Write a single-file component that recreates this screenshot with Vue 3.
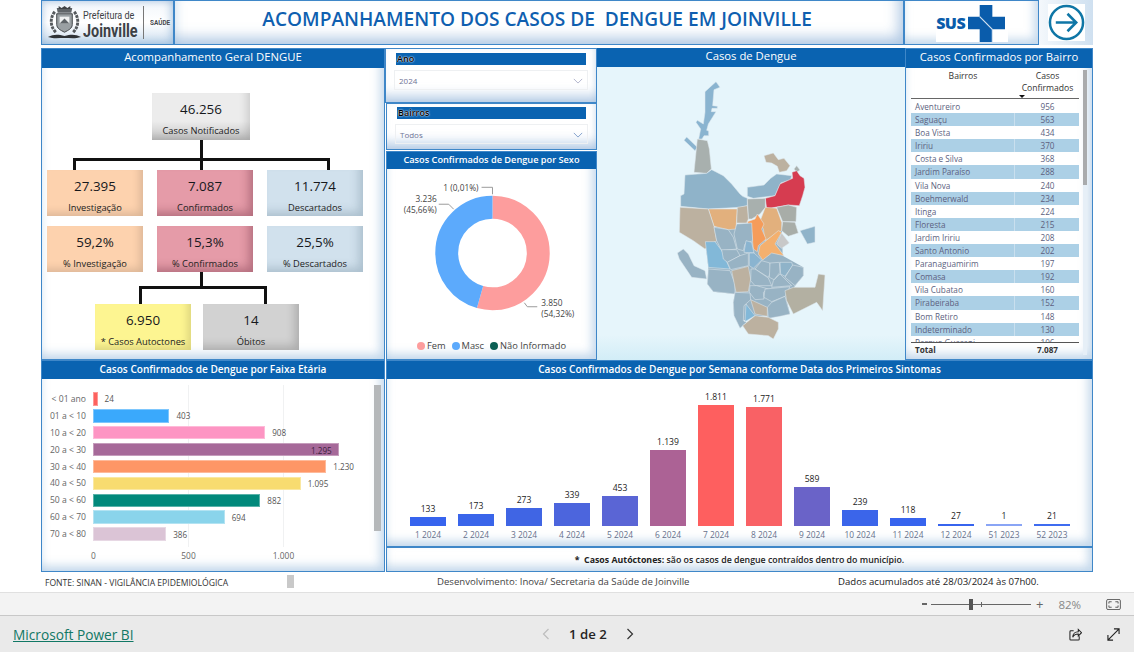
<template>
  <div class="app">
    <div class="report">
      <header class="head">
        <div class="box logo">
          <svg class="crest" viewBox="0 0 36 36">
            <path d="M10 3h16l-1 5H11z" fill="#5f6468" />
            <path d="M12 1l3 2 3-2 3 2 3-2v3H12z" fill="#3f4346" />
            <path d="M10 9h16v11c0 4-4 6-8 8-4-2-8-4-8-8z" fill="#9aa0a3" stroke="#3f4346" />
            <path d="M13 12h10v7H13z" fill="#eef0f0" />
            <path d="M13 19l5-5 5 5z" fill="#5f6468" />
            <path d="M8 7C3 13 3 22 9 28M28 7c5 6 5 15-1 21" fill="none" stroke="#55595c" stroke-width="3" stroke-dasharray="3 1" />
            <path d="M1 33c6-3 10-3 17-1 7-2 11-2 17 1-6 2-11 1-17 1s-11 1-17-1z" fill="#2f3336" />
          </svg>
          <div class="city">
            <span class="city-a">Prefeitura de</span>
            <span class="city-b">Joinville</span>
          </div>
          <span class="logo-line"></span>
          <span class="saude">SAÚDE</span>
        </div>
        <div class="box title">ACOMPANHAMENTO DOS CASOS DE&nbsp; DENGUE EM JOINVILLE</div>
        <div class="box sus">
          <div class="sus-in">
            <span class="sus-text">SUS</span>
            <svg class="sus-cross" viewBox="0 0 38 38">
              <path d="M12 0h13v12h13v13H25v13H12V25H0V12h12z" fill="#0a5cab" />
              <path d="M12 12l13 13" stroke="#d7e4f1" stroke-width="1.2" fill="none" />
              <path d="M25 25v13" stroke="#d7e4f1" stroke-width="1.2" fill="none" />
            </svg>
          </div>
        </div>
        <div class="next">
          <div class="next-in">
            <svg viewBox="0 0 38 38" class="next-ico">
              <circle cx="19" cy="19" r="17" fill="none" stroke="#0f76a6" stroke-width="2.6" />
              <path d="M8 19h21M20 10l9 9-9 9" fill="none" stroke="#0f76a6" stroke-width="2.6" />
            </svg>
          </div>
        </div>
      </header>

      <div class="top">
        <section class="box geral">
          <h3 class="bar-title big">Acompanhamento Geral DENGUE</h3>
          <div class="tree">
            <div class="card card-top gray">
              <b>46.256</b>
              <span>Casos Notificados</span>
            </div>
            <div class="stem"></div>
            <div class="fork fork-a"></div>
            <div class="cards">
              <div v-for="c in kpis" :key="c.label" class="card" :class="c.tone">
                <b>{{ c.value }}</b>
                <span>{{ c.label }}</span>
              </div>
            </div>
            <div class="stem stem-b"></div>
            <div class="fork fork-b"></div>
            <div class="cards-b">
              <div class="card yellow">
                <b>6.950</b>
                <span>* Casos Autoctones</span>
              </div>
              <div class="card silver">
                <b>14</b>
                <span>Óbitos</span>
              </div>
            </div>
          </div>
        </section>

        <div class="mid">
          <div class="box filter first">
            <div class="f-label">Ano</div>
            <div class="f-drop">
              <span>2024</span>
              <svg viewBox="0 0 12 7" class="chev"><path d="M1 1l5 5 5-5" fill="none" stroke="#a5a8c4" /></svg>
            </div>
          </div>
          <div class="box filter second">
            <div class="f-label">Bairros</div>
            <div class="f-drop">
              <span>Todos</span>
              <svg viewBox="0 0 12 7" class="chev"><path d="M1 1l5 5 5-5" fill="none" stroke="#6f93c4" /></svg>
            </div>
          </div>
          <section class="box sexo">
            <h3 class="bar-title small sexo-title">Casos Confirmados de Dengue por Sexo</h3>
            <svg class="donut" viewBox="0 0 210 164">
              <g transform="rotate(-90 106 83)">
                <circle
                  v-for="s in donut"
                  :key="s.name"
                  cx="106"
                  cy="83"
                  r="46"
                  fill="none"
                  stroke-width="23"
                  :stroke="s.color"
                  :stroke-dasharray="`${s.len} 400`"
                  :stroke-dashoffset="-s.start"
                />
              </g>
              <polyline points="95,17 106,17 106,24" class="lead" />
              <polyline points="52,34 62,34 67,39" class="lead" />
              <polyline points="138,133 141,137 151,137" class="lead" />
              <text x="92" y="21" text-anchor="end" class="lab">1 (0,01%)</text>
              <text x="50" y="32" text-anchor="end" class="lab">3.236</text>
              <text x="50" y="43" text-anchor="end" class="lab">(45,66%)</text>
              <text x="155" y="136" class="lab">3.850</text>
              <text x="155" y="147" class="lab">(54,32%)</text>
            </svg>
            <div class="legend">
              <span v-for="s in donut" :key="s.name"><i :style="{ background: s.color }"></i>{{ s.name }}</span>
            </div>
          </section>
        </div>

        <section class="box mapa">
          <h3 class="bar-title big">Casos de Dengue</h3>
          <svg class="map" viewBox="0 24 600 876">
            <polygon class="map-base" points="222,505 425,490 428,590 490,625 490,650 465,680 440,725 450,765 385,778 382,772 345,770 310,785 282,770 280,730 285,705 220,698 202,675 205,625 196,548 230,545" />
            <polygon v-for="(p, i) in regions" :key="i" :points="p[1]" :fill="p[0]" />
          </svg>
        </section>

        <section class="box bairros">
          <h3 class="bar-title big">Casos Confirmados por Bairro</h3>
          <div class="tb-wrap">
            <div class="tb">
              <div class="tb-head">
                <span>Bairros</span>
                <span class="tb-head-r">Casos Confirmados<i class="sort"></i></span>
              </div>
              <div class="tb-body">
                <div v-for="(r, i) in bairros" :key="r[0]" class="tb-row" :class="{ alt: i % 2 }">
                  <span>{{ r[0] }}</span>
                  <span class="num">{{ r[1] }}</span>
                </div>
              </div>
              <div class="tb-foot">
                <span>Total</span>
                <span class="num">7.087</span>
              </div>
            </div>
            <div class="tb-scroll"><i></i></div>
          </div>
        </section>
      </div>

      <div class="bottom">
        <section class="box faixa">
          <h3 class="bar-title small">Casos Confirmados de Dengue por Faixa Etária</h3>
          <div class="hb-wrap">
            <div class="hb-plot">
              <div v-for="r in faixas" :key="r.label" class="hb-row">
                <span class="hb-label">{{ r.label }}</span>
                <span class="hb-bar" :style="{ width: r.value * 0.1897 + 'px', background: r.color }">
                  <em v-if="r.value > 1290">{{ r.text }}</em>
                </span>
                <span v-if="r.value <= 1290" class="hb-val">{{ r.text }}</span>
              </div>
              <div class="hb-axis">
                <span>0</span>
                <span>500</span>
                <span>1.000</span>
              </div>
            </div>
            <div class="hb-scroll"></div>
          </div>
        </section>
        <div class="right-col">
          <section class="box semana">
            <h3 class="bar-title small">Casos Confirmados de Dengue por Semana conforme Data dos Primeiros Sintomas</h3>
            <div class="cols">
              <div v-for="c in semanas" :key="c.label" class="col">
                <span class="col-val">{{ c.text }}</span>
                <span class="col-bar" :style="{ height: c.value * 0.067 + 'px', background: c.color }"></span>
                <span class="col-label">{{ c.label }}</span>
              </div>
            </div>
          </section>
          <div class="box note"><b>*&nbsp; Casos Autóctones:</b>&nbsp;são os casos de dengue contraídos dentro do município.</div>
        </div>
      </div>

      <footer class="foot">
        <span class="f1">FONTE: SINAN - VIGILÂNCIA EPIDEMIOLÓGICA</span>
        <i class="f-block"></i>
        <span class="f2">Desenvolvimento: Inova/ Secretaria da Saúde de Joinville</span>
        <span class="f3">Dados acumulados até 28/03/2024 às 07h00.</span>
      </footer>
    </div>

    <div class="zoom-bar">
      <span class="z-minus"></span>
      <div class="slider"><i class="tick"></i><i class="thumb"></i></div>
      <span class="z-plus">+</span>
      <span class="z-pct">82%</span>
      <svg class="z-fit" viewBox="0 0 16 12">
        <rect x="0.5" y="0.5" width="15" height="11" rx="1.5" fill="none" stroke="#555" />
        <path d="M3 5V3h3M10 3h3v2M13 7v2h-3M6 9H3V7" fill="none" stroke="#555" />
      </svg>
    </div>
    <div class="pbi-bar">
      <a class="pbi-link">Microsoft Power BI</a>
      <div class="pager">
        <svg viewBox="0 0 8 12" class="pg"><path d="M6.5 1L1.5 6l5 5" fill="none" stroke="#bdbdbd" stroke-width="1.2" /></svg>
        <span>1 de 2</span>
        <svg viewBox="0 0 8 12" class="pg"><path d="M1.5 1l5 5-5 5" fill="none" stroke="#333" stroke-width="1.2" /></svg>
      </div>
      <div class="pbi-icons">
        <svg viewBox="0 0 14 14" class="ico">
          <path d="M5 3H2a1 1 0 0 0-1 1v8a1 1 0 0 0 1 1h8a1 1 0 0 0 1-1V9" fill="none" stroke="#222" stroke-width="1.1" />
          <path d="M4 10c0-4 3-6 6-6V1.500l3.500 3.500L10 8.500V6.500c-3 0-5 1-6 3.500z" fill="none" stroke="#222" stroke-width="1.1" />
        </svg>
        <svg viewBox="0 0 14 14" class="ico">
          <path d="M1 13L13 1M7.500 1H13v5.500M1 7.500V13h5.500" fill="none" stroke="#222" stroke-width="1.2" />
        </svg>
      </div>
    </div>
  </div>
</template>

<script setup>
const kpis = [
  { value: '27.395', label: 'Investigação', tone: 'orange' },
  { value: '7.087', label: 'Confirmados', tone: 'rose' },
  { value: '11.774', label: 'Descartados', tone: 'blue' },
  { value: '59,2%', label: '% Investigação', tone: 'orange' },
  { value: '15,3%', label: '% Confirmados', tone: 'rose' },
  { value: '25,5%', label: '% Descartados', tone: 'blue' },
];

// circunferencia do donut: 2 * pi * 46
const circ = 289;
const donut = [
  { name: 'Fem', color: '#fd9d9d', len: circ * 0.5432, start: 0 },
  { name: 'Masc', color: '#5caafc', len: circ * 0.4566, start: circ * 0.5432 },
  { name: 'Não Informado', color: '#0b5f54', len: 0.4, start: circ * 0.9998 },
];

const bairros = [
  ['Aventureiro', 956], ['Saguaçu', 563], ['Boa Vista', 434], ['Iririu', 370],
  ['Costa e Silva', 368], ['Jardim Paraíso', 288], ['Vila Nova', 240], ['Boehmerwald', 234],
  ['Itinga', 224], ['Floresta', 215], ['Jardim Iririu', 208], ['Santo Antonio', 202],
  ['Paranaguamirim', 197], ['Comasa', 192], ['Vila Cubatao', 160], ['Pirabeiraba', 152],
  ['Bom Retiro', 148], ['Indeterminado', 130], ['Parque Guarani', 106],
];

const faixas = [
  { label: '< 01 ano', value: 24, text: '24', color: '#fd625e' },
  { label: '01 a < 10', value: 403, text: '403', color: '#3aa9fc' },
  { label: '10 a < 20', value: 908, text: '908', color: '#fd95c3' },
  { label: '20 a < 30', value: 1295, text: '1.295', color: '#a66999' },
  { label: '30 a < 40', value: 1230, text: '1.230', color: '#fe9666' },
  { label: '40 a < 50', value: 1095, text: '1.095', color: '#f8dc70' },
  { label: '50 a < 60', value: 882, text: '882', color: '#01897b' },
  { label: '60 a < 70', value: 694, text: '694', color: '#8ad4eb' },
  { label: '70 a < 80', value: 386, text: '386', color: '#dbc4d6' },
];

const semanas = [
  { label: '1 2024', value: 133, text: '133', color: '#3764ee' },
  { label: '2 2024', value: 173, text: '173', color: '#3a65ea' },
  { label: '3 2024', value: 273, text: '273', color: '#4065e4' },
  { label: '4 2024', value: 339, text: '339', color: '#4c65dd' },
  { label: '5 2024', value: 453, text: '453', color: '#5a65d5' },
  { label: '6 2024', value: 1139, text: '1.139', color: '#ac6295' },
  { label: '7 2024', value: 1811, text: '1.811', color: '#fe5f5f' },
  { label: '8 2024', value: 1771, text: '1.771', color: '#f96165' },
  { label: '9 2024', value: 589, text: '589', color: '#6a63c8' },
  { label: '10 2024', value: 239, text: '239', color: '#3b65ea' },
  { label: '11 2024', value: 118, text: '118', color: '#3764ee' },
  { label: '12 2024', value: 27, text: '27', color: '#3764ee' },
  { label: '51 2023', value: 1, text: '1', color: '#8aa5f5' },
  { label: '52 2023', value: 21, text: '21', color: '#3f6cf0' },
];

// bairros do mapa, em coordenadas do recorte 600x900
const BLUE = '#8fb3c9';
const STEEL = '#98b3c4';
const SKY = '#82b8d8';
const GRAY = '#a8b0ae';
const TAN = '#bcb1a0';
const PEACH = '#e2b07d';
const regions = [
  ['#8ab4d0', '228,68 240,85 222,92 218,140 232,142 232,148 216,148 214,158 228,158 205,195 200,214 206,216 206,230 192,230 186,240 176,240 182,210 168,190 172,184 190,195 195,160 195,98'],
  ['#8ab4d0', '140,234 172,265 165,275 132,244'],
  [GRAY, '172,240 202,245 208,270 214,330 200,343 162,340'],
  [BLUE, '135,348 200,343 215,332 250,350 275,375 300,405 308,412 322,418 322,440 300,445 205,450 122,442 122,410 132,405'],
  [BLUE, '322,385 372,378 392,358 410,345 455,350 452,362 422,372 405,410 340,418 322,412'],
  [TAN, '372,290 400,282 415,302 432,298 450,320 440,335 418,340 412,322 395,312 378,310'],
  [GRAY, '462,330 470,320 480,333 470,340'],
  ['#d63c50', '456,340 470,335 480,350 492,358 495,385 488,410 478,440 445,438 405,445 380,450 376,418 405,410 420,375 458,358'],
  [GRAY, '322,420 376,418 376,445 360,465 335,480 325,480'],
  [PEACH, '205,450 292,450 288,510 265,512 222,502'],
  [TAN, '292,445 322,440 325,480 320,492 290,492'],
  [TAN, '120,445 205,450 222,502 230,545 195,570 160,545 118,520'],
  [PEACH, '376,445 410,448 425,490 425,515 375,545 370,510 358,492'],
  ['#a8ada8', '410,445 445,438 470,445 468,488 428,488'],
  ['#a8ada8', '428,488 465,490 475,522 445,532 425,515'],
  ['#c8c8c8', '425,522 448,552 425,568 410,555'],
  [BLUE, '480,515 525,502 525,550 502,555'],
  ['#f59c5a', '322,488 345,480 352,465 372,495 365,510 378,540 355,560 352,578 340,570 335,520'],
  ['#f4b06e', '415,515 425,520 405,555 432,590 395,582 368,603 355,585 360,560'],
  [STEEL, '222,505 265,512 280,535 290,570 245,575 230,545'],
  [STEEL, '290,495 335,492 338,545 315,555 310,575 292,570 282,525'],
  [SKY, '196,548 225,548 245,575 270,630 205,625'],
  [STEEL, '245,572 290,572 300,590 262,610 250,600'],
  ['#8ab4d0', '318,545 335,550 342,582 312,580'],
  [STEEL, '262,610 300,590 325,582 325,620 272,632'],
  ['#8ab4d0', '328,582 342,582 365,603 340,628 328,620'],
  [STEEL, '130,570 145,585 162,620 195,635 200,660 155,655 118,600 112,582'],
  [STEEL, '205,630 270,635 285,675 285,705 220,698 202,675'],
  [TAN, '275,635 325,622 332,660 325,698 288,700'],
  [STEEL, '345,630 365,605 390,612 392,640 385,655'],
  [STEEL, '390,612 418,610 420,640 402,662 388,655'],
  [BLUE, '420,610 455,610 458,620 435,652 422,645'],
  [STEEL, '458,618 490,625 490,650 465,680 435,655'],
  [STEEL, '333,630 345,630 385,657 395,680 345,680 332,665'],
  [STEEL, '420,645 455,680 395,685 400,665'],
  [STEEL, '330,680 350,680 385,690 370,700 372,720 345,722 328,700'],
  [STEEL, '375,690 450,683 435,712 395,728 372,715'],
  [STEEL, '395,730 435,712 450,765 420,772 385,778 382,745'],
  ['#b3b0a2', '435,695 460,685 525,685 535,645 555,648 548,755 530,730 460,765 440,725'],
  [STEEL, '285,700 330,702 332,722 312,740 310,785 320,790 300,808 282,770 280,730'],
  [SKY, '318,735 345,770 315,788'],
  [TAN, '332,722 382,745 382,772 345,765'],
  [TAN, '345,770 385,775 415,790 415,810 400,840 385,830 360,828 325,825 308,800'],
];
</script>

<style>
body {
  background: #fff;
}
</style>

<style scoped>
.app {
  width: 1134px;
  height: 652px;
  overflow: hidden;
  font-family: "Open Sans", "Noto Sans", sans-serif;
  color: #333;
  background: #fff;
}

.report {
  width: 1052px;
  height: 592px;
  padding-left: 41px;
}

.box {
  box-sizing: border-box;
  border: 1px solid #3f87c8;
  background: #fff;
  box-shadow: inset -7px -8px 10px -3px rgba(150, 185, 220, 0.55), inset 5px 0 6px -4px rgba(190, 215, 235, 0.5);
}

.head {
  display: flex;
  height: 45px;
  margin-bottom: 3px;
}

.logo {
  width: 133px;
  flex: none;
  display: flex;
  align-items: center;
  padding-left: 5px;
  background: linear-gradient(#f1f6fb, #fff 50%, #cfe0f0);
  box-shadow: inset -5px -5px 8px -3px rgba(130, 170, 210, 0.6), inset 4px 4px 6px -3px rgba(130, 170, 210, 0.5);
}

.crest {
  width: 35px;
  height: 35px;
  flex: none;
}

.city {
  display: flex;
  flex-direction: column;
  flex: none;
  width: 54px;
  margin: 3px 0 0 1px;
  font-family: Roboto, "Liberation Sans", sans-serif;
  color: #3d4145;
  line-height: 1;
}

.city-a {
  font-size: 11px;
  line-height: 12px;
  white-space: nowrap;
  transform: scaleX(0.82);
  transform-origin: left;
}

.city-b {
  font-size: 18px;
  line-height: 17px;
  font-weight: 700;
  transform: scaleX(0.8);
  transform-origin: left;
}

.logo-line {
  flex: none;
  width: 1px;
  height: 33px;
  margin-left: 6px;
  background: #777;
}

.saude {
  flex: none;
  width: 19px;
  margin-left: 6px;
  font-family: Roboto, "Liberation Sans", sans-serif;
  font-size: 8px;
  font-weight: 700;
  color: #44484c;
  transform: scaleX(0.8);
  transform-origin: left;
}

.title {
  width: 731px;
  display: flex;
  align-items: center;
  justify-content: center;
  padding-right: 4px;
  padding-bottom: 7px;
  font-size: 19.1px;
  font-weight: 600;
  color: #0f5fb0;
  white-space: nowrap;
  box-shadow: inset -10px -12px 14px -6px rgba(140, 175, 215, 0.7), inset 8px 0 10px -6px rgba(170, 200, 225, 0.5);
}

.sus {
  width: 135px;
  display: flex;
  justify-content: center;
  padding-left: 1px;
}

.sus-in {
  display: flex;
  align-items: center;
  gap: 3px;
  width: 72px;
  height: 38px;
  margin-top: 3px;
  background: #fff;
}

.sus-text {
  font-size: 16px;
  font-weight: 800;
  color: #0a5cab;
  letter-spacing: -0.5px;
}

.sus-cross {
  width: 37px;
  height: 37px;
}

.next {
  width: 54px;
  background: linear-gradient(90deg, #f4f8fc, #cfe0f0);
  padding: 4px 0 0 9px;
  box-sizing: border-box;
}

.next-in {
  width: 37px;
  height: 37px;
  background: #fff;
}

.next-ico {
  display: block;
  width: 37px;
  height: 37px;
}

.top {
  display: grid;
  grid-template-columns: 345px 211px 308px 188px;
  height: 313px;
}

.bar-title {
  margin: 0;
  background: #0a63b1;
  color: #fff;
  text-align: center;
  font-weight: 400;
  white-space: nowrap;
}

.bar-title.big {
  height: 19px;
  font-size: 11.3px;
  line-height: 16px;
}

.bar-title.small {
  height: 18px;
  font-size: 10.1px;
  line-height: 16px;
  font-weight: 600;
}

.bar-title.sexo-title {
  height: 17px;
  font-size: 9.2px;
  line-height: 15px;
}

.geral {
  width: 344px;
  height: 312px;
}

.tree {
  padding: 25px 0 0 5px;
}

.card {
  box-sizing: border-box;
  width: 96px;
  height: 46px;
  padding-top: 7px;
  display: flex;
  flex-direction: column;
  align-items: center;
  color: #222;
  box-shadow: inset -5px -5px 8px -2px rgba(0, 0, 0, 0.14);
}

.card b {
  font-size: 13.4px;
  line-height: 18px;
  font-weight: 400;
  color: #16181c;
}

.card span {
  margin-top: 5.500px;
  font-size: 9.3px;
  line-height: 13px;
  white-space: nowrap;
}

.card-top {
  width: 98px;
  height: 47px;
  margin-left: 105px;
}

.gray {
  background: linear-gradient(#ececec 60%, #c5c5c5);
}

.orange {
  background: #fdd2ae;
}

.rose {
  background: #e59ba8;
  box-shadow: inset -6px -6px 10px -2px rgba(90, 30, 50, 0.35);
}

.blue {
  background: #d1e1ed;
  box-shadow: inset -6px -6px 10px -2px rgba(60, 90, 110, 0.25);
}

.yellow {
  background: #fdf591;
}

.silver {
  background: #d2d2d2;
  box-shadow: inset -6px -6px 10px -2px rgba(0, 0, 0, 0.18);
}

.stem {
  width: 3px;
  height: 18px;
  margin-left: 153px;
  background: #111;
}

.fork {
  box-sizing: border-box;
  border: 3px solid #111;
  border-bottom: 0;
  position: relative;
}

.fork-a {
  width: 257px;
  height: 12px;
  margin-left: 26px;
}

.fork-a::after {
  content: "";
  position: absolute;
  left: 124px;
  top: 0;
  width: 3px;
  height: 9px;
  background: #111;
}

.cards {
  display: grid;
  grid-template-columns: repeat(3, 96px);
  column-gap: 14px;
  row-gap: 10px;
}

.stem-b {
  height: 14px;
}

.fork-b {
  width: 128px;
  height: 18px;
  margin-left: 92px;
}

.cards-b {
  display: flex;
  gap: 12px;
  margin-left: 48px;
}

.mid {
  display: flex;
  flex-direction: column;
  height: 312px;
}

.filter {
  box-shadow: inset 0 -14px 12px -8px rgba(140, 175, 215, 0.65), inset -4px 0 6px -3px rgba(160, 190, 220, 0.4);
}

.filter.first {
  height: 55px;
  margin-left: -1px;
  padding: 4px 10px 0 10px;
}

.filter.second {
  height: 47px;
  padding: 3px 10px 0 10px;
  margin-bottom: 1px;
}

.f-label {
  height: 12px;
  background: #0a63b1;
  color: #000;
  font-size: 9px;
  font-weight: 600;
  line-height: 11px;
  padding-left: 1px;
  text-shadow: 0 0 2px #fff, 0 0 1px #fff;
}

.f-drop {
  display: flex;
  align-items: center;
  justify-content: space-between;
  height: 18px;
  margin: 5px -2px 0;
  padding: 0 4px;
  border: 1px solid #eef0f2;
  font-size: 8px;
  color: #6f7396;
}

.chev {
  width: 10px;
  height: 6px;
  margin-top: 2px;
}

.sexo {
  flex: 1;
  display: flex;
  flex-direction: column;
}

.donut {
  display: block;
  width: 209px;
  height: 164px;
  margin-top: 1px;
}

.lead {
  fill: none;
  stroke: #9a9a9a;
}

.lab {
  font-size: 8.4px;
  fill: #444;
}

.legend {
  display: flex;
  justify-content: center;
  gap: 6px;
  margin-top: 5px;
  font-size: 9.3px;
  color: #444;
}

.legend span {
  display: flex;
  align-items: center;
  gap: 2px;
}

.legend i {
  display: block;
  width: 8px;
  height: 8px;
  border-radius: 50%;
}

.mapa {
  width: 308px;
  height: 312px;
  background: linear-gradient(#e6f5fb 92%, #d2edf7);
  border: 0;
  box-shadow: none;
}

.map {
  display: block;
  width: 200px;
  height: 292px;
  margin-left: 43px;
}

.map polygon {
  stroke: #dfe9ee;
  stroke-width: 1.6;
  stroke-linejoin: round;
}

.map .map-base {
  fill: #98b3c4;
  stroke: none;
}

.bairros {
  width: 188px;
  height: 312px;
}

.tb-wrap {
  display: flex;
  height: 290px;
}

.tb {
  width: 173px;
  padding: 0 0 0 5px;
  box-sizing: border-box;
}

.tb-head {
  display: grid;
  grid-template-columns: 104px 65px;
  height: 28px;
  padding-top: 2px;
  border-bottom: 1px solid #666;
  font-size: 8.6px;
  line-height: 12px;
  text-align: center;
  color: #333;
}

.tb-head-r {
  position: relative;
}

.sort {
  position: absolute;
  left: 4px;
  bottom: 0;
  border: 3px solid transparent;
  border-top: 3px solid #111;
  border-bottom: 0;
}

.tb-body {
  height: 242px;
  overflow: hidden;
  padding-top: 1px;
}

.tb-row {
  display: grid;
  grid-template-columns: 104px 65px;
  height: 13.100px;
  font-size: 8.2px;
  line-height: 13px;
  color: #5c5f80;
}

.tb-row > span:first-child {
  padding-left: 4px;
}

.alt {
  background: linear-gradient(90deg, #acd0e6 61.5%, #c9dfee 61.5%, #c9dfee 62%, #acd0e6 62%);
}

.num {
  text-align: center;
}

.tb-foot {
  display: grid;
  grid-template-columns: 104px 65px;
  border-top: 1px solid #555;
  height: 14px;
  line-height: 13px;
  font-size: 8.2px;
  font-weight: 700;
  color: #333;
}

.tb-foot span:first-child {
  padding-left: 4px;
}

.tb-scroll {
  width: 4px;
  height: 285px;
  margin: 2px 0 0 4px;
  background: #e6eff7;
}

.tb-scroll i {
  display: block;
  height: 115px;
  background: #a9abad;
}

.bottom {
  display: flex;
  gap: 1px;
  height: 212px;
  margin-top: -1px;
}

.faixa {
  width: 344px;
  height: 212px;
}

.hb-wrap {
  display: flex;
  padding-top: 6px;
}

.hb-plot {
  width: 332px;
  height: 180px;
  padding-top: 5.500px;
  background-image: linear-gradient(#f0f1f2, #f0f1f2), linear-gradient(#f0f1f2, #f0f1f2);
  background-size: 1px 162px;
  background-position: 146px 0, 241px 0;
  background-repeat: no-repeat;
}

.hb-row {
  display: flex;
  align-items: center;
  height: 16.900px;
  font-size: 8.1px;
  color: #555;
}

.hb-label {
  width: 44px;
  margin-right: 7px;
  text-align: right;
  font-size: 8.6px;
  color: #666;
  white-space: nowrap;
  flex: none;
}

.hb-bar {
  display: block;
  flex: none;
  height: 13.400px;
  box-sizing: border-box;
  text-align: right;
  line-height: 13px;
  border: 1px solid rgba(255, 255, 255, 0.35);
  box-shadow: 1px 0 0 rgba(255, 255, 255, 0.4);
}

.hb-bar em {
  font-style: normal;
  padding-right: 6px;
  color: #3d2140;
}

.hb-val {
  margin-left: 7px;
}

.hb-axis {
  display: grid;
  grid-template-columns: repeat(3, 95px);
  justify-items: center;
  margin: 7px 0 0 4px;
  font-size: 8.4px;
  color: #666;
}

.hb-scroll {
  width: 7px;
  height: 146px;
  background: #b5b8ba;
}

.right-col {
  width: 707px;
  height: 212px;
}

.semana {
  height: 187px;
}

.cols {
  display: grid;
  grid-template-columns: repeat(14, 48px);
  padding: 0 0 6px 17px;
  height: 167px;
  box-sizing: border-box;
}

.col {
  display: flex;
  flex-direction: column;
  align-items: center;
  justify-content: flex-end;
  min-width: 0;
}

.col-val {
  font-size: 8.6px;
  line-height: 11px;
  margin-bottom: 2px;
  color: #222;
}

.col-bar {
  display: block;
  width: 36px;
  min-height: 2px;
  box-shadow: 0 -1px 0 rgba(255, 255, 255, 0.4);
}

.col-label {
  margin-top: 3px;
  font-size: 8.4px;
  line-height: 11px;
  color: #66718c;
  white-space: nowrap;
}

.note {
  height: 25px;
  display: flex;
  align-items: center;
  justify-content: center;
  font-size: 8.8px;
  color: #222;
  font-weight: 600;
}

.note b {
  font-weight: 700;
}

.foot {
  display: flex;
  align-items: center;
  height: 19px;
  padding-left: 4px;
  white-space: nowrap;
}

.f1 {
  width: 242px;
  flex: none;
  margin-top: 3px;
  font-size: 8.6px;
  color: #333;
}

.f-block {
  display: block;
  width: 7px;
  height: 13px;
  background: #c9c9c9;
  flex: none;
}

.f2 {
  width: 401px;
  margin-left: 143px;
  flex: none;
  font-size: 9.6px;
  color: #444;
}

.f3 {
  font-size: 9.6px;
  color: #222;
}

.zoom-bar {
  display: flex;
  align-items: center;
  height: 23px;
  box-sizing: border-box;
  border-top: 1px solid #e0e0e0;
  background: #f3f3f3;
  padding-left: 922px;
  color: #666;
}

.z-minus {
  width: 5px;
  height: 2px;
  background: #666;
}

.slider {
  position: relative;
  width: 100px;
  height: 1px;
  margin-left: 4px;
  background: #666;
}

.thumb {
  position: absolute;
  left: 38px;
  top: -5px;
  width: 4px;
  height: 11px;
  background: #555;
}

.tick {
  position: absolute;
  left: 50px;
  top: -2px;
  width: 1px;
  height: 5px;
  background: #666;
}

.z-plus {
  margin-left: 5px;
  font-size: 13px;
}

.z-pct {
  margin-left: 15px;
  font-size: 11.5px;
  color: #888;
}

.z-fit {
  width: 15px;
  height: 11px;
  margin-left: 25px;
}

.pbi-bar {
  display: flex;
  align-items: center;
  height: 37px;
  box-sizing: border-box;
  border-top: 1px solid #c8c8c8;
  background: #eaeaea;
  padding-left: 13px;
}

.pbi-link {
  width: 529px;
  font-size: 13.7px;
  color: #117865;
  text-decoration: underline;
}

.pager {
  display: flex;
  align-items: center;
  gap: 19px;
  font-size: 13.2px;
  font-weight: 600;
  color: #252423;
}

.pg {
  width: 8px;
  height: 12px;
}

.pbi-icons {
  display: flex;
  gap: 25px;
  margin-left: auto;
  margin-right: 14px;
}

.ico {
  display: block;
  width: 13px;
  height: 13px;
}
</style>
